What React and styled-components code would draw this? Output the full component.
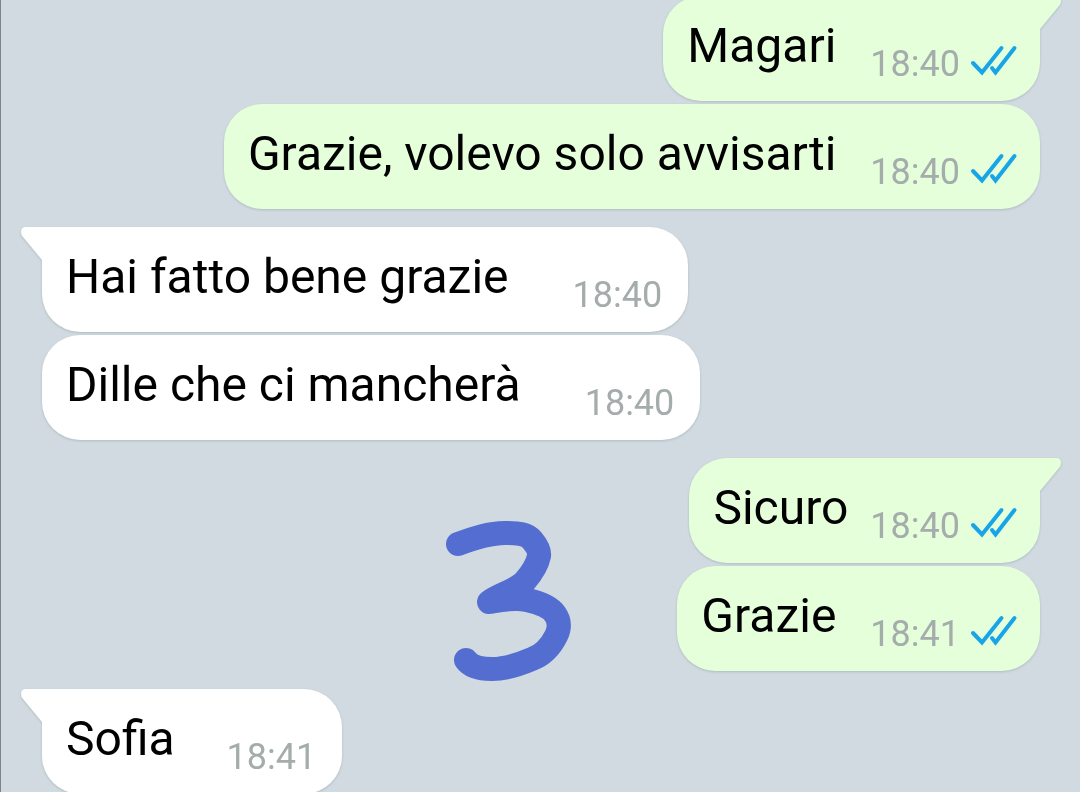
import styled, { createGlobalStyle, css } from "styled-components";

const groups = [
  {
    own: true,
    messages: [
      { text: "Magari", time: "18:40" },
      { text: "Grazie, volevo solo avvisarti", time: "18:40" },
    ],
  },
  {
    own: false,
    messages: [
      { text: "Hai fatto bene grazie", time: "18:40" },
      { text: "Dille che ci mancherà", time: "18:40" },
    ],
  },
  {
    own: true,
    messages: [
      { text: "Sicuro", time: "18:40", tight: true },
      { text: "Grazie", time: "18:41" },
    ],
  },
  {
    own: false,
    messages: [{ text: "Sofia", time: "18:41", tight: true }],
  },
];

const ReadTicks = () => (
  <Ticks viewBox="0 0 44 32" role="img" aria-label="Read">
    <path d="M1 19 L10 28.500 L29.500 4" />
    <path d="M20 24 L23.500 28.500 L42.500 4" />
  </Ticks>
);

const BubbleTail = ({ own }) => (
  <Tail $own={own} viewBox="0 0 24 34" aria-hidden="true">
    <path d="M24 0 H6 Q1 0 1 5 Q1 8 3 10 L22 33 H24 Z" />
  </Tail>
);

const Message = ({ own, first, text, time, tight }) => (
  <Bubble $own={own} $first={first}>
    {first && <BubbleTail own={own} />}
    <Text>{text}</Text>
    <Meta $own={own} $tight={tight}>
      <time>{time}</time>
      {own && <ReadTicks />}
    </Meta>
  </Bubble>
);

const App = () => {
  return (
    <>
      <GlobalStyle />
      <Screen>
        <Chat>
          {groups.map((group, i) => (
            <Group key={i} $own={group.own}>
              {group.messages.map((message, j) => (
                <Message
                  key={message.text}
                  own={group.own}
                  first={j === 0}
                  {...message}
                />
              ))}
            </Group>
          ))}
        </Chat>
        <Doodle viewBox="0 0 128 164" role="img" aria-label="3">
          <path d="M15 26 C31 20 46 15 62 15 C76 15 84 16 89 22 C94 28 97 33 96 38 C94 48 88 56 82 63 C73 73 56 76 46 84 C58 82 72 79 84 82 C98 85 108 90 112 96 C117 103 117 110 113 118 C107 130 100 137 89 141 C75 147 61 151 49 151 C38 151 28 149 23 142" />
        </Doodle>
      </Screen>
    </>
  );
};

export default App;

const GlobalStyle = createGlobalStyle`
  * {
    box-sizing: border-box;
  }

  body {
    margin: 0;
    background-color: #d0dae0;
    font-family: Roboto, sans-serif;
  }
`;

const Screen = styled.main`
  position: relative;
  height: 100vh;
  overflow: hidden;
  border-left: 1px solid #78858f;
`;

/* the thread is scrolled slightly past its first message */
const Chat = styled.div`
  display: flex;
  flex-direction: column;
  gap: 18px;
  margin-top: -4px;
  padding: 0 40px 0 41px;
`;

const Group = styled.section`
  display: flex;
  flex-direction: column;
  align-items: ${({ $own }) => ($own ? "flex-end" : "flex-start")};
  gap: 3px;
`;

const Bubble = styled.article`
  position: relative;
  display: flex;
  align-items: flex-start;
  height: 105px;
  padding: 20px 24px 0;
  border-radius: 38px;
  color: ${({ $own }) => ($own ? "#e4ffda" : "#ffffff")};
  background-color: currentColor;
  filter: drop-shadow(0 1px 1px #b0bbc2);

  ${({ $own, $first }) =>
    $first &&
    ($own
      ? css`
          border-top-right-radius: 0;
        `
      : css`
          border-top-left-radius: 0;
        `)}
`;

const Text = styled.p`
  margin: 0;
  color: #000000;
  font-size: 48px;
  line-height: 60px;
  white-space: nowrap;
`;

const Meta = styled.div`
  display: flex;
  align-items: center;
  gap: 12px;
  margin-top: 28px;
  margin-left: ${({ $own, $tight }) => ($own ? 34 : 64) - ($tight ? 12 : 0)}px;
  margin-right: ${({ $own }) => ($own ? 0 : 2)}px;
  color: #a5acac;
  font-size: 36px;
  line-height: 40px;
`;

const Ticks = styled.svg`
  width: 44px;
  height: 32px;
  margin-bottom: 8px;
  overflow: visible;
  fill: none;
  stroke: #18a5e8;
  stroke-width: 4;
  stroke-linecap: round;
`;

const Tail = styled.svg`
  position: absolute;
  top: 0;
  left: -22px;
  width: 24px;
  height: 34px;
  fill: currentColor;

  ${({ $own }) =>
    $own &&
    css`
      left: auto;
      right: -22px;
      transform: scaleX(-1);
    `}
`;

/* drawn by hand over the thread */
const Doodle = styled.svg`
  position: absolute;
  top: 518px;
  left: 442px;
  width: 128px;
  height: 164px;
  overflow: visible;
  fill: none;
  stroke: #536dd1;
  stroke-width: 24;
  stroke-linecap: round;
  stroke-linejoin: round;
`;
